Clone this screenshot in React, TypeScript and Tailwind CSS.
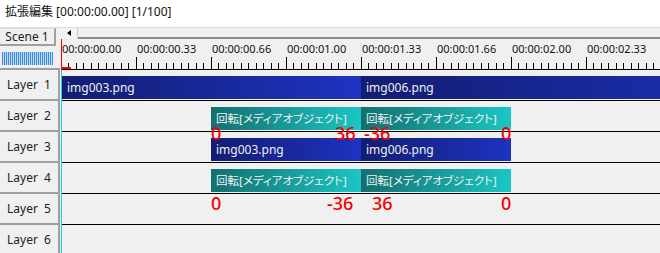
const ui = "font-['Noto_Sans','Noto_Sans_CJK_JP',sans-serif]";

const labels = [
  "00:00:00.00",
  "00:00:00.33",
  "00:00:00.66",
  "00:00:01.00",
  "00:00:01.33",
  "00:00:01.66",
  "00:00:02.00",
  "00:00:02.33",
];

function Ruler() {
  const ticks = [];
  for (let j = 0; j < 80; j++) {
    const x = Math.floor(j * 7.5) + 0.5;
    const major = j % 10 === 0;
    ticks.push(<line key={j} x1={x} x2={x} y1={major ? 18 : 24} y2={30} stroke="#000" />);
  }
  return (
    <div className="relative h-[31px]">
      <svg className="absolute inset-0" width="599" height="31" shapeRendering="crispEdges">
        {ticks}
        <line x1="0" x2="599" y1="30.5" y2="30.5" stroke="#000" />
        <line x1="0.5" x2="0.5" y1="0" y2="31" stroke="#ff0000" />
        <rect x="0" y="28" width="10" height="2" fill="#ff0000" />
      </svg>
      <div className="relative flex pt-[3px]">
        {labels.map((l) => (
          <div key={l} className="w-[75px] shrink-0 pl-[1px] text-[11px] leading-[14px] text-[#111]">
            {l}
          </div>
        ))}
      </div>
    </div>
  );
}

function Clip({ kind, w, label }: { kind: "img" | "fx"; w: number; label: string }) {
  const bg =
    kind === "img"
      ? "bg-linear-to-r from-[#131d72] to-[#1d33c2] text-[12px]"
      : "bg-linear-to-r from-[#137070] to-[#1ac6c4] text-[11.5px] [font-feature-settings:'palt']";
  return (
    <div
      className={`h-[23px] shrink-0 flex items-center pt-[1px] pl-[5px] text-[#f0f0f0] whitespace-nowrap overflow-hidden ${bg}`}
      style={{ width: w }}
    >
      {label}
    </div>
  );
}

const fx = "回転[メディアオブジェクト]";

function Row({ children, last }: { children?: React.ReactNode; last?: boolean }) {
  return (
    <div className={`h-[31px] pt-[6px] flex overflow-hidden ${last ? "" : "border-b border-black"}`}>
      {children}
    </div>
  );
}

function LayerLabel({ n }: { n: number }) {
  return (
    <div className="h-[31px] w-[60px] border-r-2 border-b-2 border-[#a0a0a0] flex items-center justify-center text-[12px] text-[#222]">
      Layer&nbsp;&nbsp;{n}
    </div>
  );
}

function Num({ left, top, children }: { left: number; top: number; children: string }) {
  return (
    <span
      className="absolute text-[18px] leading-[18px] font-medium text-[#f00000] font-['Noto_Sans',sans-serif]"
      style={{ left, top }}
    >
      {children}
    </span>
  );
}

export default function App() {
  return (
    <div className={`w-[660px] h-[253px] overflow-hidden bg-[#f0f0f0] ${ui}`}>
      <div className="h-[28px] bg-white border-b border-[#dcdcdc] pl-[5px] pt-[4px] text-[12px] leading-[16px] text-[#111]">
        拡張編集 [00:00:00.00] [1/100]
      </div>
      <div className="flex">
        <div className="w-[61px] shrink-0">
          <div className="h-[42px]">
            <div className="h-[18px] w-[56px] border-t border-t-[#e0e0e0] border-r-2 border-b-2 border-[#a0a0a0] flex items-center justify-center text-[12px] text-[#222] leading-none">
              Scene 1
            </div>
            <div className="mt-[6px] ml-[2px] h-[13px] w-[51px] bg-[repeating-linear-gradient(90deg,#3a8ae6_0px,#3a8ae6_1px,#c4dbf6_1px,#c4dbf6_2px)]" />
            <div className="mt-[3px] h-[2px] w-[60px] bg-[#a0a0a0]" />
          </div>
          {[1, 2, 3, 4, 5, 6].map((n) => (
            <LayerLabel key={n} n={n} />
          ))}
        </div>
        <div className="flex-1 min-w-0">
          <div className="h-[11px] flex">
            <div className="w-[17px] h-[10px] border-r border-[#c8c8c8] bg-[#f4f4f4] flex items-center justify-center">
              <svg width="4" height="6" viewBox="0 0 4 6">
                <path d="M4 0 L0 3 L4 6 Z" fill="#000" />
              </svg>
            </div>
            <div className="flex-1 border-b-2 border-[#8a8a8a]" />
          </div>
          <Ruler />
          <div className="relative border-l border-[#00e0e0]">
            <Row>
              <Clip kind="img" w={299} label="img003.png" />
              <Clip kind="img" w={450} label="img006.png" />
            </Row>
            <Row>
              <div className="w-[149px] shrink-0" />
              <Clip kind="fx" w={150} label={fx} />
              <Clip kind="fx" w={150} label={fx} />
            </Row>
            <Row>
              <div className="w-[149px] shrink-0" />
              <Clip kind="img" w={150} label="img003.png" />
              <Clip kind="img" w={150} label="img006.png" />
            </Row>
            <Row>
              <div className="w-[149px] shrink-0" />
              <Clip kind="fx" w={150} label={fx} />
              <Clip kind="fx" w={150} label={fx} />
            </Row>
            <Row />
            <Row last />
            <Num left={149} top={54}>0</Num>
            <Num left={273} top={54}>36</Num>
            <Num left={302} top={54}>-36</Num>
            <Num left={439} top={54}>0</Num>
            <Num left={149} top={124}>0</Num>
            <Num left={265} top={124}>-36</Num>
            <Num left={310} top={124}>36</Num>
            <Num left={439} top={124}>0</Num>
          </div>
        </div>
      </div>
    </div>
  );
}
